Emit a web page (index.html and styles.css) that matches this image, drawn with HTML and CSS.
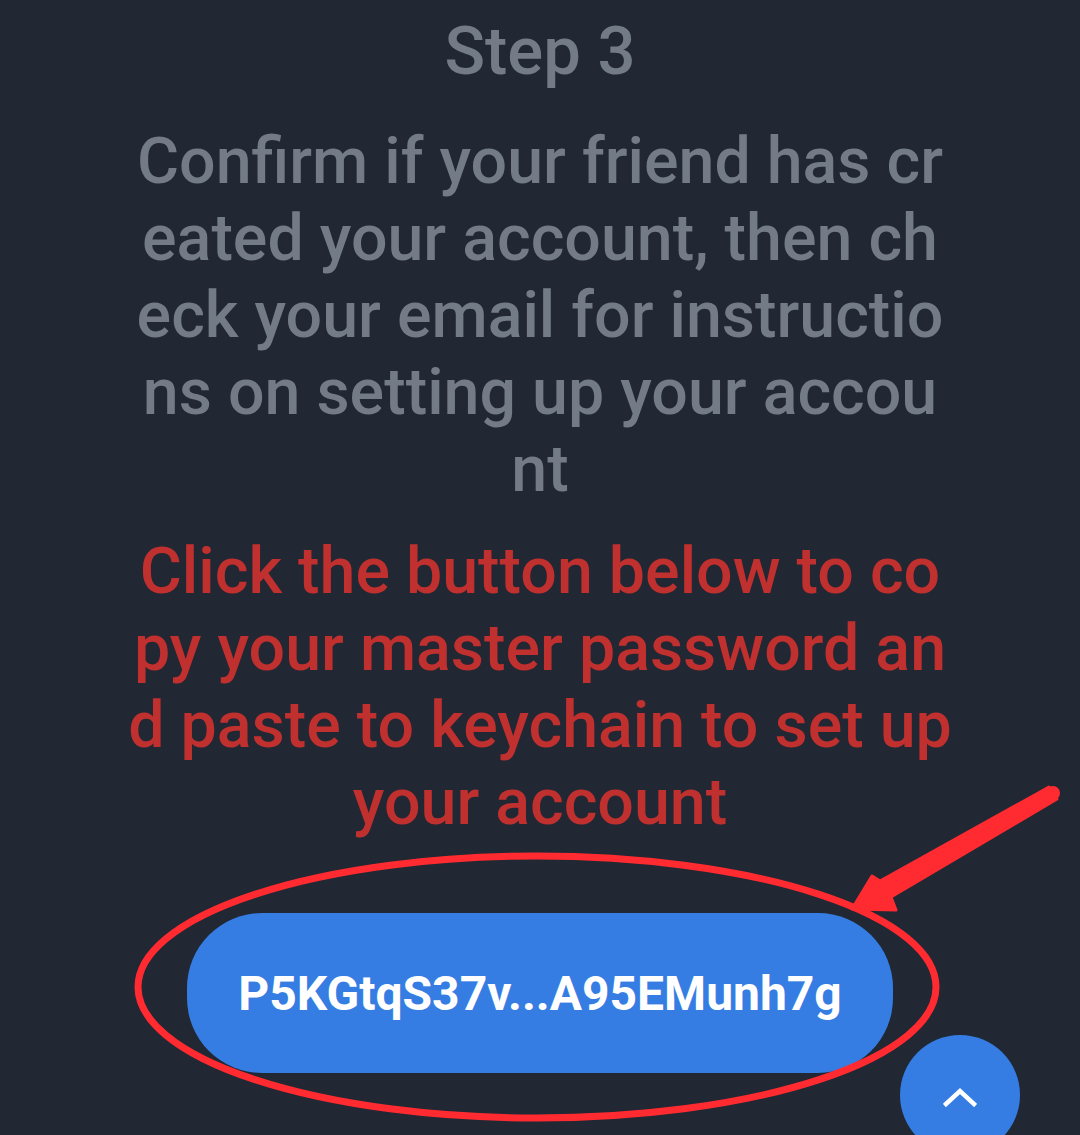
FILE: index.html
```html
<!DOCTYPE html>
<html lang="en">
<head>
    <meta charset="UTF-8">
    <meta name="viewport" content="width=device-width, initial-scale=1.0">
    <title>Keychain - Step 3</title>
    <link rel="stylesheet" href="styles.css">
</head>
<body>

<div class="screen">
    <h1 class="step-title">Step 3</h1>

    <p class="step-text">Confirm if your friend has created your account, then check your email for instructions on setting up your account</p>

    <p class="step-warning">Click the button below to copy your master password and paste to keychain to set up your account</p>

    <div class="copy-row">
        <button class="copy-btn" onclick="copyPassword()">P5KGtqS37v...A95EMunh7g</button>
    </div>
</div>

<!-- Scroll to top -->
<button class="scroll-top" aria-label="Back to top">
    <svg width="34" height="20" viewBox="0 0 34 20">
        <polyline points="3,17 17,4 31,17" fill="none" stroke="#fff" stroke-width="4.5" stroke-linecap="square"/>
    </svg>
</button>

<!-- Red markup drawn over the screenshot -->
<svg class="markup" width="1080" height="1135" viewBox="0 0 1080 1135">
    <ellipse cx="537" cy="987" rx="399" ry="131" fill="none" stroke="#ff2b30" stroke-width="7"/>
    <polygon points="1049,787 1057,799 891,897 896,910 852,909 872,876 880,881"
             fill="#ff2b30" stroke="#ff2b30" stroke-width="3" stroke-linejoin="round"/>
    <circle cx="1053" cy="793" r="7" fill="#ff2b30"/>
</svg>

<script>
    // Copy the full master password to clipboard
    function copyPassword() {
        const fullPassword = "P5KGtqS37v...A95EMunh7g";
        if (navigator.clipboard) {
            navigator.clipboard.writeText(fullPassword);
        }
    }
</script>

</body>
</html>
```

FILE: styles.css
```css
body {
    font-family: Roboto, "Noto Sans", Arial, sans-serif;
    background-color: #212733;
    margin: 0;
    padding: 0;
    height: 1135px;
    overflow: hidden;
}

.screen {
    width: 830px;
    margin: 0 auto;
    padding-top: 11px;
    text-align: center;
    word-break: break-all;
}

.step-title {
    font-size: 67px;
    font-weight: 500;
    line-height: 80px;
    color: #737b86;
    margin: 0 0 32px;
}

.step-text {
    font-size: 64.5px;
    font-weight: 500;
    line-height: 77px;
    color: #737b86;
    margin: 0 0 25px;
}

.step-warning {
    font-size: 64.5px;
    font-weight: 500;
    line-height: 77px;
    color: #c0302f;
    margin: 0;
}

.copy-row {
    display: flex;
    justify-content: center;
    margin-top: 72px;
}

.copy-btn {
    width: 706px;
    height: 160px;
    border: none;
    border-radius: 75px;
    background: #357de3;
    color: #fff;
    font-family: Roboto, Arial, sans-serif;
    font-size: 48px;
    font-weight: 700;
    cursor: pointer;
}

.scroll-top {
    position: fixed;
    left: 900px;
    top: 1035px;
    width: 120px;
    height: 120px;
    border: none;
    border-radius: 50%;
    background: #357de3;
    display: flex;
    justify-content: center;
    align-items: flex-start;
    padding-top: 52px;
    cursor: pointer;
}

.markup {
    position: absolute;
    left: 0;
    top: 0;
    pointer-events: none;
}
```
